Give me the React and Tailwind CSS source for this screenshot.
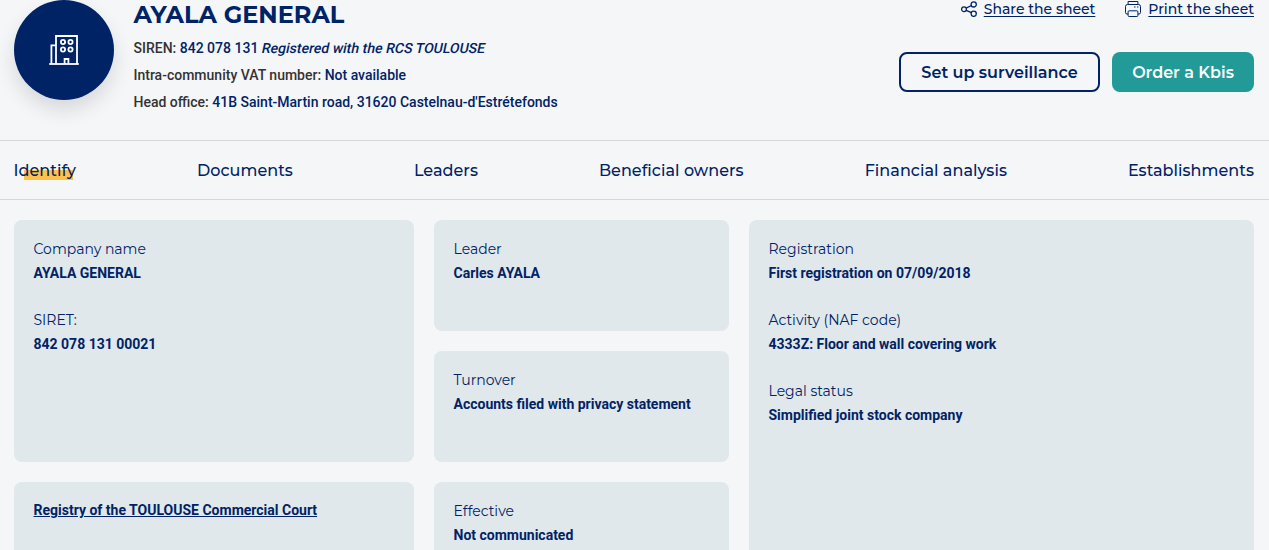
const navItems = ["Identify", "Documents", "Leaders", "Beneficial owners", "Financial analysis", "Establishments"];

function BuildingIcon() {
  return (
    <svg width="30" height="30" viewBox="0 0 30 30" fill="none" stroke="#fff" strokeWidth="1.8">
      <path d="M0.2 29H29.8" />
      <path d="M7 29V1H28V29" />
      <path d="M2.4 29V10.3H7" />
      <path d="M15.6 29V24H19.4V29" />
      <circle cx="14" cy="7" r="2.1" />
      <circle cx="21.5" cy="7" r="2.1" />
      <circle cx="14" cy="14.5" r="2.1" />
      <circle cx="21.5" cy="14.5" r="2.1" />
    </svg>
  );
}

function ShareIcon() {
  return (
    <svg width="16" height="16" viewBox="0 0 16 16" fill="none" stroke="#002366" strokeWidth="1.3">
      <circle cx="3" cy="8.2" r="2.4" />
      <circle cx="12.7" cy="3.4" r="2.6" />
      <circle cx="12.7" cy="12.8" r="2.6" />
      <path d="M5.2 7.1L10.4 4.5M5.2 9.3L10.4 11.7" />
    </svg>
  );
}

function PrintIcon() {
  return (
    <svg width="16" height="16" viewBox="0 0 16 16" fill="none" stroke="#002366" strokeWidth="1">
      <path d="M3.1 3.5V0.5H12.9V3.5" />
      <path d="M3 13H2Q0.5 13 0.5 11.5V5.5Q0.5 3.5 2.5 3.5H13.5Q15.5 3.5 15.5 5.5V11.5Q15.5 13 14 13H13" />
      <rect x="3.1" y="9.8" width="9.8" height="5.7" rx="1" />
      <path d="M9 6H10.5M12 6H13.4" />
    </svg>
  );
}

function Field({ label, value }) {
  return (
    <div className="mb-[23px]">
      <div className="font-['Montserrat',sans-serif] text-[14px] leading-6">{label}</div>
      <div className="text-[14px] leading-6 font-bold">{value}</div>
    </div>
  );
}

function Card({ className = "pt-[17px]", children }) {
  return <section className={`rounded-lg bg-[#e1e8eb] px-[19.5px] ${className}`}>{children}</section>;
}

export default function App() {
  return (
    <div className="h-[550px] overflow-hidden bg-[#f5f6f8] font-[Roboto,sans-serif] text-[#002366]">
      <header className="flex h-[140px] items-start pr-[15px] pl-[14px]">
        <div className="flex size-[100px] shrink-0 items-center justify-center rounded-full bg-[#002366] shadow-[0_10px_20px_rgba(0,0,0,0.12)]">
          <BuildingIcon />
        </div>
        <div className="ml-[19.5px] grow text-[14px] leading-[27px] font-medium text-[#333]">
          <h1 className="mb-[6px] font-['Montserrat',sans-serif] text-[24px] leading-[29px] font-bold text-[#002366]">AYALA GENERAL</h1>
          <p>SIREN: <span className="text-[#002366]">842 078 131 <em className="inline-block -skew-x-12 not-italic">Registered with the RCS TOULOUSE</em></span></p>
          <p>Intra-community VAT number: <span className="text-[#002366]">Not available</span></p>
          <p>Head office: <span className="text-[#002366]">41B Saint-Martin road, 31620 Castelnau-d'Estrétefonds</span></p>
        </div>
        <div className="flex flex-col items-end font-['Montserrat',sans-serif]">
          <div className="flex h-[18px] gap-[30px] text-[14px] leading-[18px] font-medium">
            <a className="flex gap-[7px]"><span className="mt-px"><ShareIcon /></span><span className="underline underline-offset-2">Share the sheet</span></a>
            <a className="flex gap-[7px]"><span className="mt-px"><PrintIcon /></span><span className="underline underline-offset-2">Print the sheet</span></a>
          </div>
          <div className="mt-[34px] flex gap-3 text-[16px] font-semibold">
            <button className="h-10 w-[201px] rounded-lg border-2 border-[#002366] pt-[2px]">Set up surveillance</button>
            <button className="h-10 w-[142px] rounded-lg bg-[#219a98] pt-[2px] text-white">Order a Kbis</button>
          </div>
        </div>
      </header>
      <nav className="flex h-[60px] items-center justify-between border-y border-[#d3d6da] pt-[2px] pr-[15px] pl-[13.5px] font-['Montserrat',sans-serif] text-[16px] font-medium">
        {navItems.map((item, i) => (
          <a key={item} className="relative tracking-[0.04px]">
            {i === 0 && <span className="absolute top-[11px] left-[10.5px] h-[10px] w-[49px] bg-[#ffc14a]" />}
            <span className="relative">{item}</span>
          </a>
        ))}
      </nav>
      <main className="mt-5 grid auto-rows-[111px] grid-cols-[400px_295px_505px] gap-5 pl-[14px]">
        <Card className="row-span-2 pt-[17px]">
          <Field label="Company name" value="AYALA GENERAL" />
          <Field label="SIRET:" value="842 078 131 00021" />
        </Card>
        <Card><Field label="Leader" value="Carles AYALA" /></Card>
        <Card className="row-span-3 pt-[17px]">
          <Field label="Registration" value="First registration on 07/09/2018" />
          <Field label="Activity (NAF code)" value="4333Z: Floor and wall covering work" />
          <Field label="Legal status" value="Simplified joint stock company" />
        </Card>
        <Card><Field label="Turnover" value="Accounts filed with privacy statement" /></Card>
        <Card className="pt-4">
          <a className="text-[14px] leading-[22px] font-bold underline">Registry of the TOULOUSE Commercial Court</a>
        </Card>
        <Card><Field label="Effective" value="Not communicated" /></Card>
      </main>
    </div>
  );
}
